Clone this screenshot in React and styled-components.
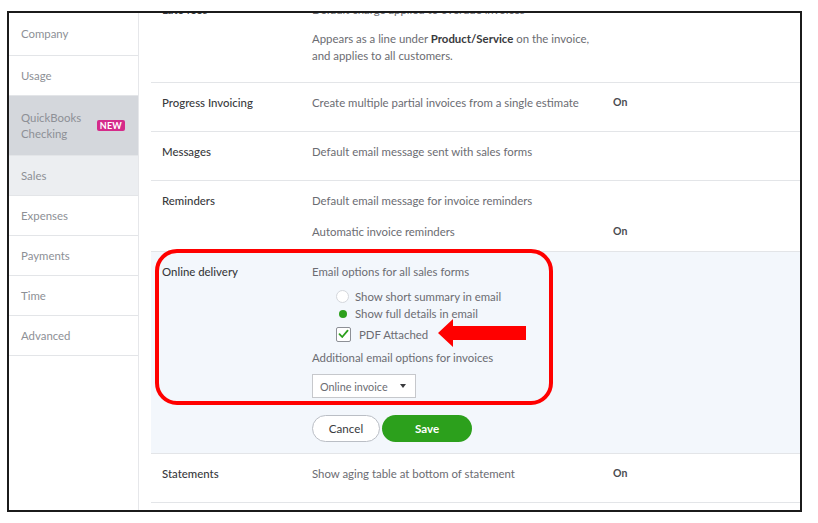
import styled, { createGlobalStyle } from 'styled-components';

const GlobalStyle = createGlobalStyle`
  html, body {
    margin: 0;
    padding: 0;
    background: #ffffff;
  }
  body {
    font-family: Lato, "Open Sans", sans-serif;
    font-size: 11.4px;
    -webkit-font-smoothing: antialiased;
  }
`;

const Frame = styled.div`
  margin: 11px 0 0 7px;
  width: 795px;
  height: 501px;
  box-sizing: border-box;
  border: 2px solid #1b1b1b;
  display: grid;
  grid-template-columns: 130px 1fr;
  overflow: hidden;
  background: #ffffff;
`;

const Sidebar = styled.nav`
  border-right: 1px solid #e6e7ea;
  display: flex;
  flex-direction: column;
`;

const NavItem = styled.div`
  height: ${(p) => p.$h || 39}px;
  flex-shrink: 0;
  display: flex;
  align-items: center;
  justify-content: space-between;
  padding: 0 13px 0 12px;
  border-bottom: 1px solid #e3e5e8;
  background: ${(p) =>
    p.$state === 'hover' ? '#d4d7dc' : p.$state === 'active' ? '#eceef1' : '#ffffff'};
  color: #8d9096;
  font-size: 11.4px;
  line-height: 16px;
`;

const Badge = styled.span`
  background: #d52b8a;
  color: #ffffff;
  font-weight: 700;
  font-size: 9px;
  line-height: 11px;
  padding: 0 3px;
  border-radius: 2px;
  letter-spacing: 0.2px;
`;

const Content = styled.main`
  padding-left: 12px;
  margin-top: -21px;
`;

const Row = styled.section`
  position: relative;
  display: grid;
  grid-template-columns: 150px 299px 1fr;
  padding: ${(p) => p.$pt ?? 11}px 0 ${(p) => p.$pb ?? 20}px 11px;
  border-bottom: 1px solid #e3e5e8;
  background: ${(p) => (p.$open ? '#f3f7fc' : '#ffffff')};
  line-height: 17px;
`;

const Label = styled.div`
  color: #393a3d;
  font-size: 11.4px;
  font-weight: 500;
`;

const Desc = styled.div`
  display: flex;
  flex-direction: column;
  color: #6b6c72;
  font-size: 11.4px;
  b {
    color: #393a3d;
    font-weight: 700;
  }
`;

const Line = styled.div`
  margin-top: ${(p) => p.$mt || 0}px;
`;

const Value = styled.div`
  display: flex;
  flex-direction: column;
  justify-content: ${(p) => (p.$bottom ? 'flex-end' : 'flex-start')};
  color: #4a4b50;
  font-size: 10.5px;
  font-weight: 700;
  padding-left: 2px;
`;

const Options = styled.div`
  display: flex;
  flex-direction: column;
  margin: 8px 0 0 24px;
`;

const Option = styled.label`
  display: flex;
  align-items: center;
  gap: ${(p) => p.$gap || 6}px;
  height: ${(p) => p.$h || 17}px;
  margin-top: ${(p) => p.$mt || 0}px;
  color: #6b6c72;
  font-size: 11.4px;
`;

const Radio = styled.span`
  width: 13px;
  height: 13px;
  box-sizing: border-box;
  border-radius: 50%;
  display: flex;
  align-items: center;
  justify-content: center;
  background: ${(p) => (p.$checked ? 'transparent' : '#ffffff')};
  border: 1px solid ${(p) => (p.$checked ? 'transparent' : '#d4d7dc')};
  &::after {
    content: '';
    width: 8px;
    height: 8px;
    border-radius: 50%;
    background: ${(p) => (p.$checked ? '#2ca01c' : 'transparent')};
  }
`;

const Check = styled.span`
  width: 15px;
  height: 15px;
  box-sizing: border-box;
  border: 1px solid #8d9096;
  border-radius: 2px;
  background: #ffffff;
  display: flex;
  align-items: center;
  justify-content: center;
`;

const Select = styled.div`
  margin-top: ${(p) => p.$mt || 0}px;
  width: 104px;
  height: 24px;
  box-sizing: border-box;
  border: 1px solid #c6c8cc;
  background: #ffffff;
  display: flex;
  align-items: center;
  justify-content: space-between;
  padding: 0 9px 0 7px;
  color: #6b6c72;
  font-size: 10.8px;
`;

const Caret = styled.span`
  width: 0;
  height: 0;
  border-left: 3.5px solid transparent;
  border-right: 3.5px solid transparent;
  border-top: 4px solid #393a3d;
`;

const Buttons = styled.div`
  display: flex;
  gap: 2px;
  margin-top: 17px;
`;

const Button = styled.button`
  height: 27px;
  width: ${(p) => p.$w}px;
  box-sizing: border-box;
  border-radius: 14px;
  font-family: inherit;
  font-size: 11.6px;
  border: ${(p) => (p.$primary ? 'none' : '1.5px solid #babec5')};
  background: ${(p) => (p.$primary ? '#2ca01c' : '#ffffff')};
  color: ${(p) => (p.$primary ? '#ffffff' : '#393a3d')};
  font-weight: ${(p) => (p.$primary ? 700 : 400)};
  padding: 0;
`;

const Highlight = styled.div`
  position: absolute;
  left: 4px;
  top: -3px;
  width: 398px;
  height: 156px;
  box-sizing: border-box;
  border: 4px solid #ff0000;
  border-radius: 22px;
  pointer-events: none;
`;

const Arrow = styled.svg`
  position: absolute;
  left: 287px;
  top: 67px;
`;

export default function App() {
  return (
    <>
      <GlobalStyle />
      <Frame>
        <Sidebar>
          <NavItem $h={42}>Company</NavItem>
          <NavItem>Usage</NavItem>
          <NavItem $h={59} $state="hover">
            <span>
              QuickBooks
              <br />
              Checking
            </span>
            <Badge>NEW</Badge>
          </NavItem>
          <NavItem $state="active">Sales</NavItem>
          <NavItem>Expenses</NavItem>
          <NavItem>Payments</NavItem>
          <NavItem>Time</NavItem>
          <NavItem>Advanced</NavItem>
        </Sidebar>

        <Content>
          <Row $pt={9} $pb={18}>
            <Label>Late fees</Label>
            <Desc>
              <Line>Default charge applied to overdue invoices</Line>
              <Line $mt={12}>
                Appears as a line under <b>Product/Service</b> on the invoice,
              </Line>
              <Line>and applies to all customers.</Line>
            </Desc>
            <Value>Off</Value>
          </Row>

          <Row>
            <Label>Progress Invoicing</Label>
            <Desc>Create multiple partial invoices from a single estimate</Desc>
            <Value>On</Value>
          </Row>

          <Row>
            <Label>Messages</Label>
            <Desc>Default email message sent with sales forms</Desc>
            <Value />
          </Row>

          <Row $pb={11}>
            <Label>Reminders</Label>
            <Desc>
              <Line>Default email message for invoice reminders</Line>
              <Line $mt={14}>Automatic invoice reminders</Line>
            </Desc>
            <Value $bottom>On</Value>
          </Row>

          <Row $open $pb={11}>
            <Label>Online delivery</Label>
            <Desc>
              <Line>Email options for all sales forms</Line>
              <Options>
                <Option>
                  <Radio />
                  Show short summary in email
                </Option>
                <Option>
                  <Radio $checked />
                  Show full details in email
                </Option>
                <Option $h={20} $mt={2} $gap={8}>
                  <Check>
                    <svg width="11" height="10" viewBox="0 0 11 10">
                      <path
                        d="M1.5 5.2 L4.2 8 L9.6 1.6"
                        fill="none"
                        stroke="#2ca01c"
                        strokeWidth="1.8"
                        strokeLinecap="round"
                        strokeLinejoin="round"
                      />
                    </svg>
                  </Check>
                  PDF Attached
                </Option>
              </Options>
              <Line $mt={5}>Additional email options for invoices</Line>
              <Select $mt={8}>
                Online invoice
                <Caret />
              </Select>
              <Buttons>
                <Button $w={68}>Cancel</Button>
                <Button $w={90} $primary>
                  Save
                </Button>
              </Buttons>
            </Desc>
            <Value />
            <Highlight />
            <Arrow width="88" height="28" viewBox="0 0 88 28">
              <polygon points="0,14 15,0 15,7 88,7 88,21 15,21 15,28" fill="#ff0000" />
            </Arrow>
          </Row>

          <Row>
            <Label>Statements</Label>
            <Desc>Show aging table at bottom of statement</Desc>
            <Value>On</Value>
          </Row>
        </Content>
      </Frame>
    </>
  );
}
